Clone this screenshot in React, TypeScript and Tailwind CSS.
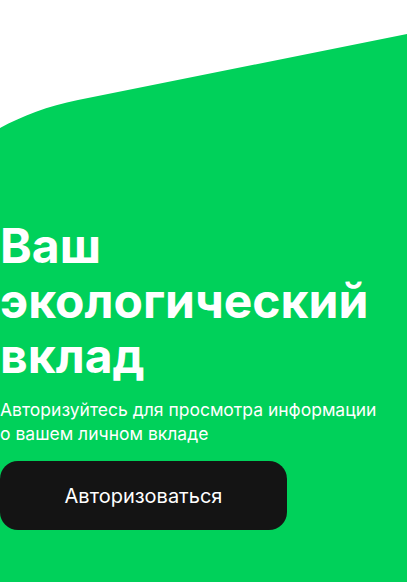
import React from 'react';

const App: React.FC = () => {
  return (
    <div className="min-h-screen bg-white flex flex-col" style={{ fontFamily: 'Inter, "Noto Sans", sans-serif' }}>
      {/* Top wave */}
      <svg className="block w-full h-[130px]" viewBox="0 0 407 130" preserveAspectRatio="none">
        <path d="M0 128 C 22 116 48 106 78 100 L 407 34 L 407 131 L 0 131 Z" fill="#00d15a" />
      </svg>

      {/* Green section */}
      <div className="flex-1 bg-[#00d15a] pt-[88px] pb-12">
        <h1 className="text-white font-bold text-[48px] leading-[55px]">
          Ваш
          <br />
          экологический
          <br />
          вклад
        </h1>
        <p className="mt-[15px] text-white text-[17.5px] leading-[24px]">
          Авторизуйтесь для просмотра информации
          <br />
          о вашем личном вкладе
        </p>
        <button className="mt-[15px] w-[287px] h-[69px] rounded-[18px] bg-[#141414] text-white text-[20px]">
          Авторизоваться
        </button>
      </div>
    </div>
  );
};

export default App;
